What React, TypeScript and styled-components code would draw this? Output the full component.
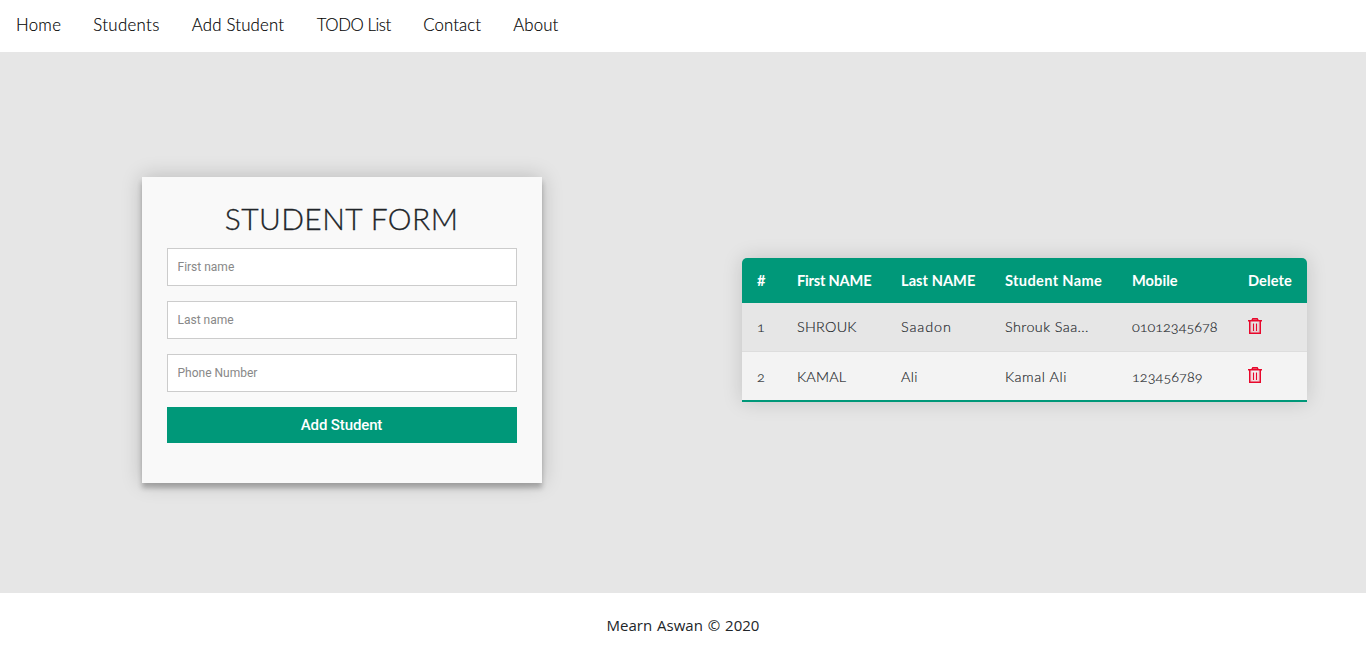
import React from 'react';
import styled, { createGlobalStyle } from 'styled-components';

const GlobalStyle = createGlobalStyle`
  * { box-sizing: border-box; }
  body { margin: 0; background: #fff; font-family: Lato, "Liberation Sans", sans-serif; }
`;

const Page = styled.div`
  display: flex;
  flex-direction: column;
  height: 657px;
`;

const Nav = styled.nav`
  display: flex;
  gap: 32px;
  height: 52px;
  padding: 0 16px;
  line-height: 50px;
`;

const NavLink = styled.a<{ $width: number; $track?: number }>`
  width: ${(p) => p.$width}px;
  color: #000;
  font-size: 16.8px;
  font-weight: 300;
  letter-spacing: ${(p) => p.$track ?? 0}px;
  white-space: nowrap;
  -webkit-text-stroke: 0.15px #000;
`;

const Main = styled.main`
  display: grid;
  grid-template-columns: 1fr 1fr;
  place-items: center;
  height: 541px;
  padding-top: 15px;
  background: #e6e6e6;
`;

const Card = styled.form`
  display: flex;
  flex-direction: column;
  gap: 15px;
  width: 400px;
  height: 306px;
  padding: 25px;
  background: #f9f9f9;
  box-shadow: 0 0 20px rgba(0, 0, 0, 0.2), 0 5px 5px rgba(0, 0, 0, 0.24);
`;

const Title = styled.h3`
  margin: -2px 0 -3px;
  color: #212529;
  font-size: 30px;
  font-weight: 300;
  letter-spacing: 0.42px;
  line-height: 36px;
  text-align: center;
  -webkit-text-stroke: 0.3px #212529;
`;

const Input = styled.input`
  flex: none;
  width: 100%;
  height: 38px;
  padding: 0 10px;
  border: 1px solid #ccc;
  border-radius: 0;
  background: #fff;
  font: 400 12px Roboto, sans-serif;
  &::placeholder { color: #888; opacity: 1; }
`;

const Submit = styled.button`
  flex: none;
  height: 36px;
  padding: 0;
  border: 0;
  background: #009879;
  color: #fff;
  font: 500 15px Roboto, sans-serif;
  letter-spacing: -0.12px;
`;

const Table = styled.table`
  width: 565px;
  table-layout: fixed;
  border-spacing: 0;
  border-radius: 5px 5px 0 0;
  overflow: hidden;
  background: #e6e6e6;
  box-shadow: 0 0 20px rgba(0, 0, 0, 0.15);
  font-size: 14.4px;
`;

const HeadCell = styled.th<{ $width: number; $track?: number }>`
  width: ${(p) => p.$width}px;
  height: 45px;
  padding: 0 0 0 15px;
  background: #009879;
  color: #fff;
  font-size: 14.6px;
  font-weight: 700;
  letter-spacing: ${(p) => p.$track ?? 0}px;
  text-align: left;
  white-space: nowrap;
`;

const Row = styled.tr`
  height: 49px;
  & > td { padding-bottom: 2px; border-bottom: 1px solid #ddd; }
  &:nth-of-type(even) { height: 50px; background: #f3f3f3; }
  &:last-of-type > td { padding-bottom: 0; border-bottom: 2px solid #009879; }
  &:last-of-type svg { margin-bottom: 2px; }
`;

const Cell = styled.td<{ $track?: number }>`
  padding: 0 0 0 15px;
  color: #212529;
  font-weight: 300;
  font-variant-numeric: oldstyle-nums;
  letter-spacing: ${(p) => p.$track ?? 0}px;
  white-space: nowrap;
  -webkit-text-stroke: 0.15px #212529;
`;

const TrashIcon = styled.svg`
  display: block;
  width: 16px;
  height: 16px;
`;

const Footer = styled.footer`
  height: 64px;
  color: #212529;
  font-family: "Open Sans", sans-serif;
  font-size: 15px;
  line-height: 64px;
  text-align: center;
  word-spacing: 1px;
`;

const links = [
  { label: 'Home', width: 45.3, track: 0.3 },
  { label: 'Students', width: 66.5, track: 0.35 },
  { label: 'Add Student', width: 93, track: 0.2 },
  { label: 'TODO List', width: 74.5, track: -0.45 },
  { label: 'Contact', width: 58, track: 0.1 },
  { label: 'About', width: 46, track: 0.1 },
];

const columns = [
  { label: '#', width: 40, track: 0 },
  { label: 'First NAME', width: 104, track: -0.2 },
  { label: 'Last NAME', width: 104, track: 0.05 },
  { label: 'Student Name', width: 127, track: 0.35 },
  { label: 'Mobile', width: 116, track: 0.05 },
  { label: 'Delete', width: 74, track: 0.1 },
];

const students = [
  [['1', 0], ['SHROUK', 0.25], ['Saadon', 0.9], ['Shrouk Saa...', 0.42], ['01012345678', 0]],
  [['2', 0], ['KAMAL', 0.2], ['Ali', 0.4], ['Kamal Ali', 0.55], ['123456789', 0.08]],
] as [string, number][][];

function Trash() {
  return (
    <TrashIcon viewBox="0 0 16 16" fill="none" stroke="#e8082c">
      <path d="M0 2.75h14M1.75 3v12.25h10.5V3" strokeWidth="1.5" />
      <path d="M3.8 2.5L4.8.7h4.4l1 1.8" strokeWidth="1.4" />
      <path d="M5.5 5.5v7.5M8.5 5.5v7.5" strokeWidth="1.2" />
      <path d="M4.5 1.6h5" strokeOpacity="0.5" />
      <path d="M3 4v10M11 4v10M3 14h8" strokeOpacity="0.2" />
    </TrashIcon>
  );
}

export default function App() {
  return (
    <Page>
      <GlobalStyle />
      <Nav>
        {links.map((l) => (
          <NavLink key={l.label} $width={l.width} $track={l.track}>{l.label}</NavLink>
        ))}
      </Nav>
      <Main>
        <Card>
          <Title>STUDENT FORM</Title>
          <Input placeholder="First name" />
          <Input placeholder="Last name" />
          <Input placeholder="Phone Number" />
          <Submit type="button">Add Student</Submit>
        </Card>
        <Table>
          <thead>
            <tr>
              {columns.map((c) => (
                <HeadCell key={c.label} $width={c.width} $track={c.track}>{c.label}</HeadCell>
              ))}
            </tr>
          </thead>
          <tbody>
            {students.map((cells) => (
              <Row key={cells[0][0]}>
                {cells.map(([text, track]) => (
                  <Cell key={text} $track={track}>{text}</Cell>
                ))}
                <Cell><Trash /></Cell>
              </Row>
            ))}
          </tbody>
        </Table>
      </Main>
      <Footer>Mearn Aswan © 2020</Footer>
    </Page>
  );
}
